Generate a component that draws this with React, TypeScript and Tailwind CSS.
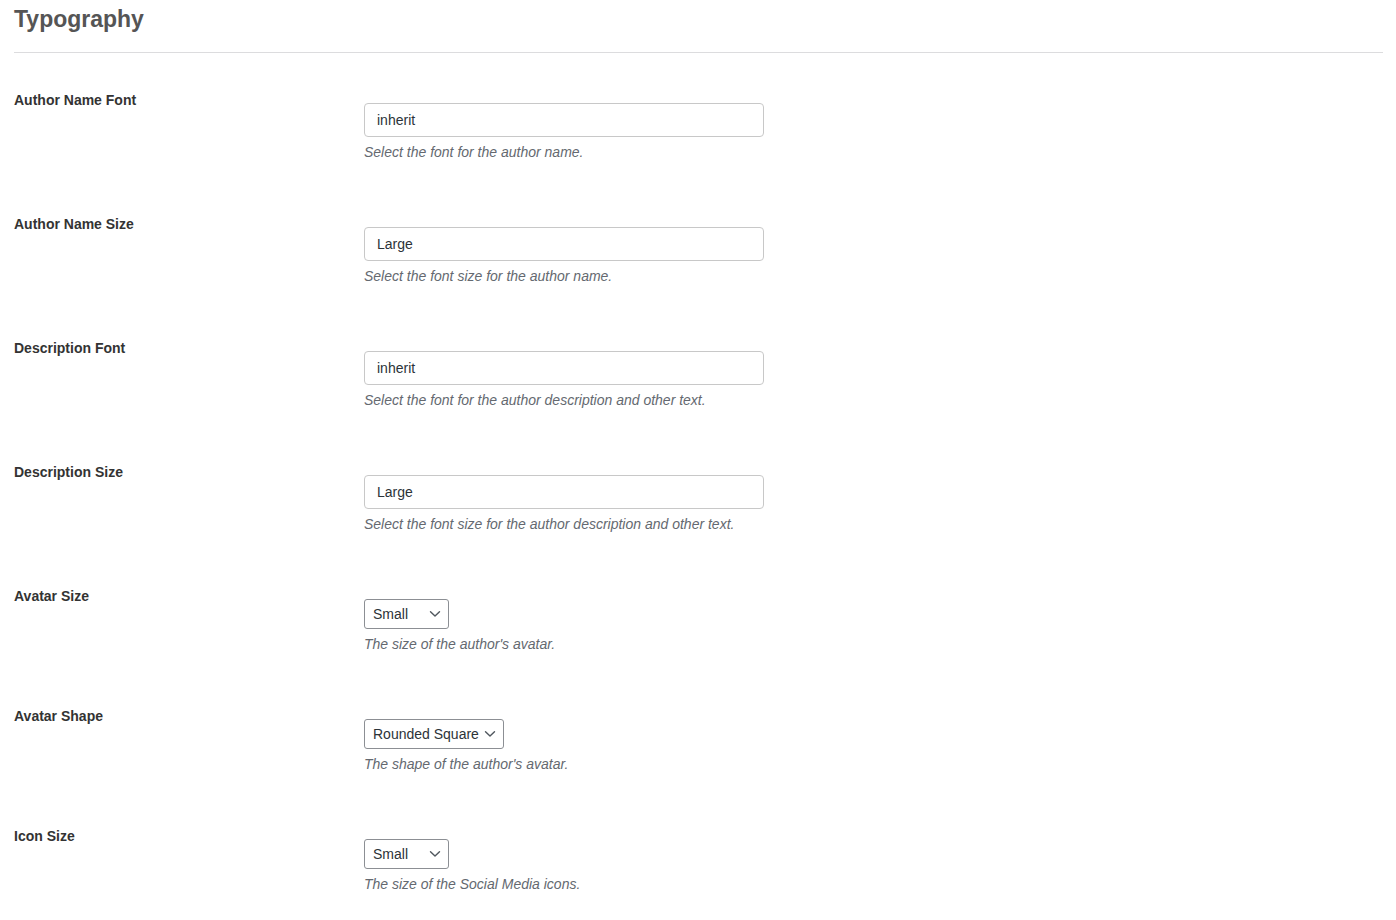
const textRows = [
  { label: "Author Name Font", value: "inherit", desc: "Select the font for the author name." },
  { label: "Author Name Size", value: "Large", desc: "Select the font size for the author name." },
  { label: "Description Font", value: "inherit", desc: "Select the font for the author description and other text." },
  { label: "Description Size", value: "Large", desc: "Select the font size for the author description and other text." },
];

const selectRows = [
  { label: "Avatar Size", value: "Small", width: "w-[85px]", desc: "The size of the author's avatar." },
  { label: "Avatar Shape", value: "Rounded Square", width: "w-[140px]", desc: "The shape of the author's avatar." },
  { label: "Icon Size", value: "Small", width: "w-[85px]", desc: "The size of the Social Media icons." },
];

function Chevron() {
  return (
    <svg width="12" height="8" viewBox="0 0 12 8" fill="none" className="shrink-0">
      <path d="M1.5 1.75 L6 6 L10.5 1.75" stroke="#50575e" strokeWidth="1.4" strokeLinecap="round" strokeLinejoin="round" />
    </svg>
  );
}

function Row({ label, children, desc }: { label: string; children: React.ReactNode; desc: string }) {
  return (
    <div className="flex pb-[52px]">
      <div className="w-[350px] shrink-0 text-[14px] leading-[20px] font-bold text-[#333]">{label}</div>
      <div className="pt-[13px]">
        {children}
        <p className="mt-[5px] text-[14px] leading-[20px] italic text-[#646970]">{desc}</p>
      </div>
    </div>
  );
}

export default function App() {
  return (
    <div className="min-h-screen bg-white pl-[14px] pr-[13px] font-['Liberation_Sans',Arial,sans-serif]">
      <h2 className="pt-[4px] text-[23px] leading-[30px] font-bold text-[#555]">Typography</h2>
      <div className="mt-[18px] border-t border-[#dcdcde]" />
      <div className="pt-[37px]">
        {textRows.map((r) => (
          <Row key={r.label} label={r.label} desc={r.desc}>
            <input
              readOnly
              value={r.value}
              className="block h-[34px] w-[400px] rounded-[4px] border border-[#c8c8c8] bg-white px-[12px] text-[14px] text-[#2c3338] outline-none"
            />
          </Row>
        ))}
        {selectRows.map((r) => (
          <Row key={r.label} label={r.label} desc={r.desc}>
            <div
              className={`flex h-[30px] ${r.width} items-center justify-between rounded-[3px] border border-[#8c8f94] bg-white pl-[8px] pr-[7px] text-[14px] text-[#2c3338]`}
            >
              <span>{r.value}</span>
              <Chevron />
            </div>
          </Row>
        ))}
      </div>
    </div>
  );
}
